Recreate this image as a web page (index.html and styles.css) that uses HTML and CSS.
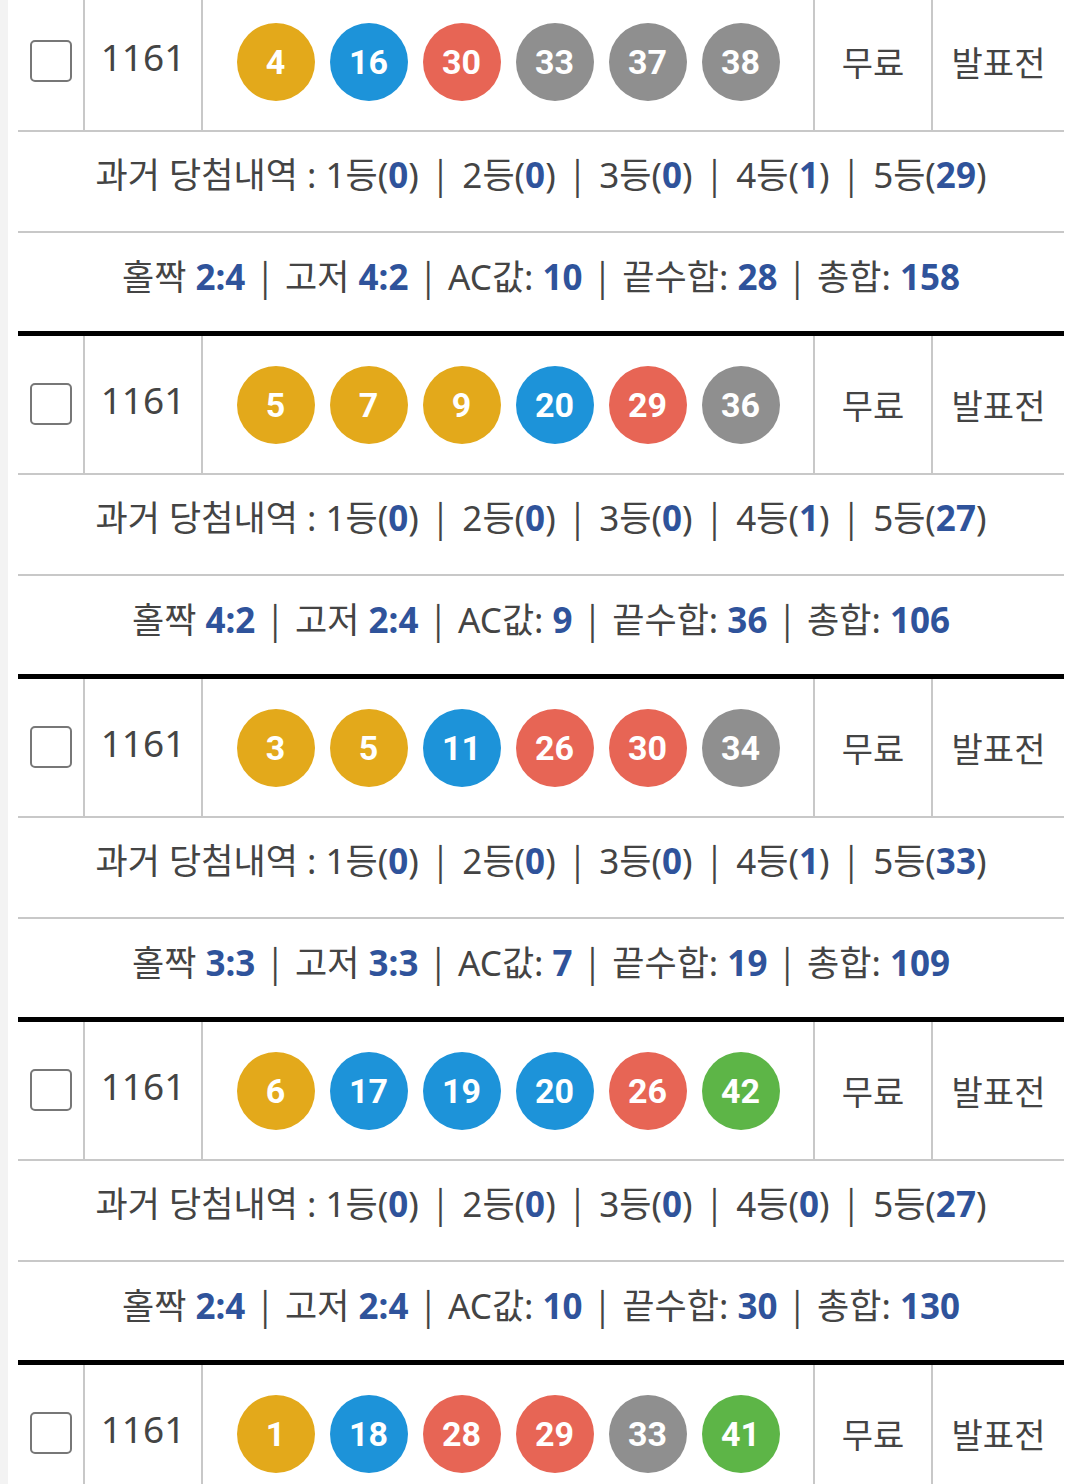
FILE: index.html
```html
<!doctype html>
<html lang="ko">
<head>
<meta charset="utf-8">
<title>로또 번호 목록</title>
<link rel="stylesheet" href="styles.css">
</head>
<body>
<div class="page">
  <div class="list">

    <div class="ticket">
      <div class="ticket-main">
        <div class="cell check"><span class="box"></span></div>
        <div class="cell round">1161</div>
        <div class="cell balls">
          <span class="ball y">4</span><span class="ball b">16</span><span class="ball r">30</span><span class="ball g">33</span><span class="ball g">37</span><span class="ball g">38</span>
        </div>
        <div class="cell price">무료</div>
        <div class="cell result">발표전</div>
      </div>
      <div class="ticket-row"><span>과거 당첨내역 : 1등(<b>0</b>) <i>|</i> 2등(<b>0</b>) <i>|</i> 3등(<b>0</b>) <i>|</i> 4등(<b>1</b>) <i>|</i> 5등(<b>29</b>)</span></div>
      <div class="ticket-row stats"><span>홀짝 <b>2:4</b> <i>|</i> 고저 <b>4:2</b> <i>|</i> AC값: <b>10</b> <i>|</i> 끝수합: <b>28</b> <i>|</i> 총합: <b>158</b></span></div>
    </div>

    <div class="ticket">
      <div class="ticket-main">
        <div class="cell check"><span class="box"></span></div>
        <div class="cell round">1161</div>
        <div class="cell balls">
          <span class="ball y">5</span><span class="ball y">7</span><span class="ball y">9</span><span class="ball b">20</span><span class="ball r">29</span><span class="ball g">36</span>
        </div>
        <div class="cell price">무료</div>
        <div class="cell result">발표전</div>
      </div>
      <div class="ticket-row"><span>과거 당첨내역 : 1등(<b>0</b>) <i>|</i> 2등(<b>0</b>) <i>|</i> 3등(<b>0</b>) <i>|</i> 4등(<b>1</b>) <i>|</i> 5등(<b>27</b>)</span></div>
      <div class="ticket-row stats"><span>홀짝 <b>4:2</b> <i>|</i> 고저 <b>2:4</b> <i>|</i> AC값: <b>9</b> <i>|</i> 끝수합: <b>36</b> <i>|</i> 총합: <b>106</b></span></div>
    </div>

    <div class="ticket">
      <div class="ticket-main">
        <div class="cell check"><span class="box"></span></div>
        <div class="cell round">1161</div>
        <div class="cell balls">
          <span class="ball y">3</span><span class="ball y">5</span><span class="ball b">11</span><span class="ball r">26</span><span class="ball r">30</span><span class="ball g">34</span>
        </div>
        <div class="cell price">무료</div>
        <div class="cell result">발표전</div>
      </div>
      <div class="ticket-row"><span>과거 당첨내역 : 1등(<b>0</b>) <i>|</i> 2등(<b>0</b>) <i>|</i> 3등(<b>0</b>) <i>|</i> 4등(<b>1</b>) <i>|</i> 5등(<b>33</b>)</span></div>
      <div class="ticket-row stats"><span>홀짝 <b>3:3</b> <i>|</i> 고저 <b>3:3</b> <i>|</i> AC값: <b>7</b> <i>|</i> 끝수합: <b>19</b> <i>|</i> 총합: <b>109</b></span></div>
    </div>

    <div class="ticket">
      <div class="ticket-main">
        <div class="cell check"><span class="box"></span></div>
        <div class="cell round">1161</div>
        <div class="cell balls">
          <span class="ball y">6</span><span class="ball b">17</span><span class="ball b">19</span><span class="ball b">20</span><span class="ball r">26</span><span class="ball gr">42</span>
        </div>
        <div class="cell price">무료</div>
        <div class="cell result">발표전</div>
      </div>
      <div class="ticket-row"><span>과거 당첨내역 : 1등(<b>0</b>) <i>|</i> 2등(<b>0</b>) <i>|</i> 3등(<b>0</b>) <i>|</i> 4등(<b>0</b>) <i>|</i> 5등(<b>27</b>)</span></div>
      <div class="ticket-row stats"><span>홀짝 <b>2:4</b> <i>|</i> 고저 <b>2:4</b> <i>|</i> AC값: <b>10</b> <i>|</i> 끝수합: <b>30</b> <i>|</i> 총합: <b>130</b></span></div>
    </div>

    <div class="ticket">
      <div class="ticket-main">
        <div class="cell check"><span class="box"></span></div>
        <div class="cell round">1161</div>
        <div class="cell balls">
          <span class="ball y">1</span><span class="ball b">18</span><span class="ball r">28</span><span class="ball r">29</span><span class="ball g">33</span><span class="ball gr">41</span>
        </div>
        <div class="cell price">무료</div>
        <div class="cell result">발표전</div>
      </div>
    </div>

  </div>
</div>
</body>
</html>
```

FILE: styles.css
```css
body{
	margin:0;
	background:#fff;
	font-family:"Noto Sans","Noto Sans CJK KR",sans-serif;
	color:#444;
}
.page{
	border-left:8px solid #f3f3f3;
	padding:0 16px 0 10px;
	height:1484px;
	overflow:hidden;
}
.list{
	margin-top:-12px;
}

.ticket{
	border-top:5px solid #000;
}
.ticket-main{
	display:grid;
	grid-template-columns:65px 118px 612px 118px 1fr;
	height:137px;
	border-bottom:2px solid #c8c8c8;
}
.cell{
	display:flex;
	align-items:center;
	justify-content:center;
	border-left:2px solid #c8c8c8;
	font-size:34px;
	color:#444;
}
.cell.check{
	border-left:0;
}
.box{
	width:38px;
	height:38px;
	border:2px solid #777;
	border-radius:5px;
	margin-bottom:2px;
}
.round{
	font-size:37px;
	padding-bottom:10px;
}
.balls{
	gap:15px;
}
.ball{
	width:78px;
	height:78px;
	border-radius:50%;
	display:flex;
	align-items:center;
	justify-content:center;
	color:#fff;
	font:bold 34px Roboto,sans-serif;
}
.ball.y{ background:#e3a91b; }
.ball.b{ background:#1d93d9; }
.ball.r{ background:#e76555; }
.ball.g{ background:#8f8f8f; }
.ball.gr{ background:#5db547; }

.ticket-row{
	height:101px;
	display:flex;
	align-items:center;
	justify-content:center;
	padding-bottom:19px;
	box-sizing:border-box;
	border-bottom:2px solid #c8c8c8;
	font-size:35px;
	white-space:nowrap;
	color:#444;
}
.ticket-row.stats{
	height:98px;
	padding-bottom:16px;
	border-bottom:0;
}
.ticket-row b{
	color:#2f539b;
}
.ticket-row i{
	font-style:normal;
	font-family:"Noto Sans CJK KR",sans-serif;
	margin:0 8px;
}
.ticket-row.stats i{
	margin:0 6px;
}
```
